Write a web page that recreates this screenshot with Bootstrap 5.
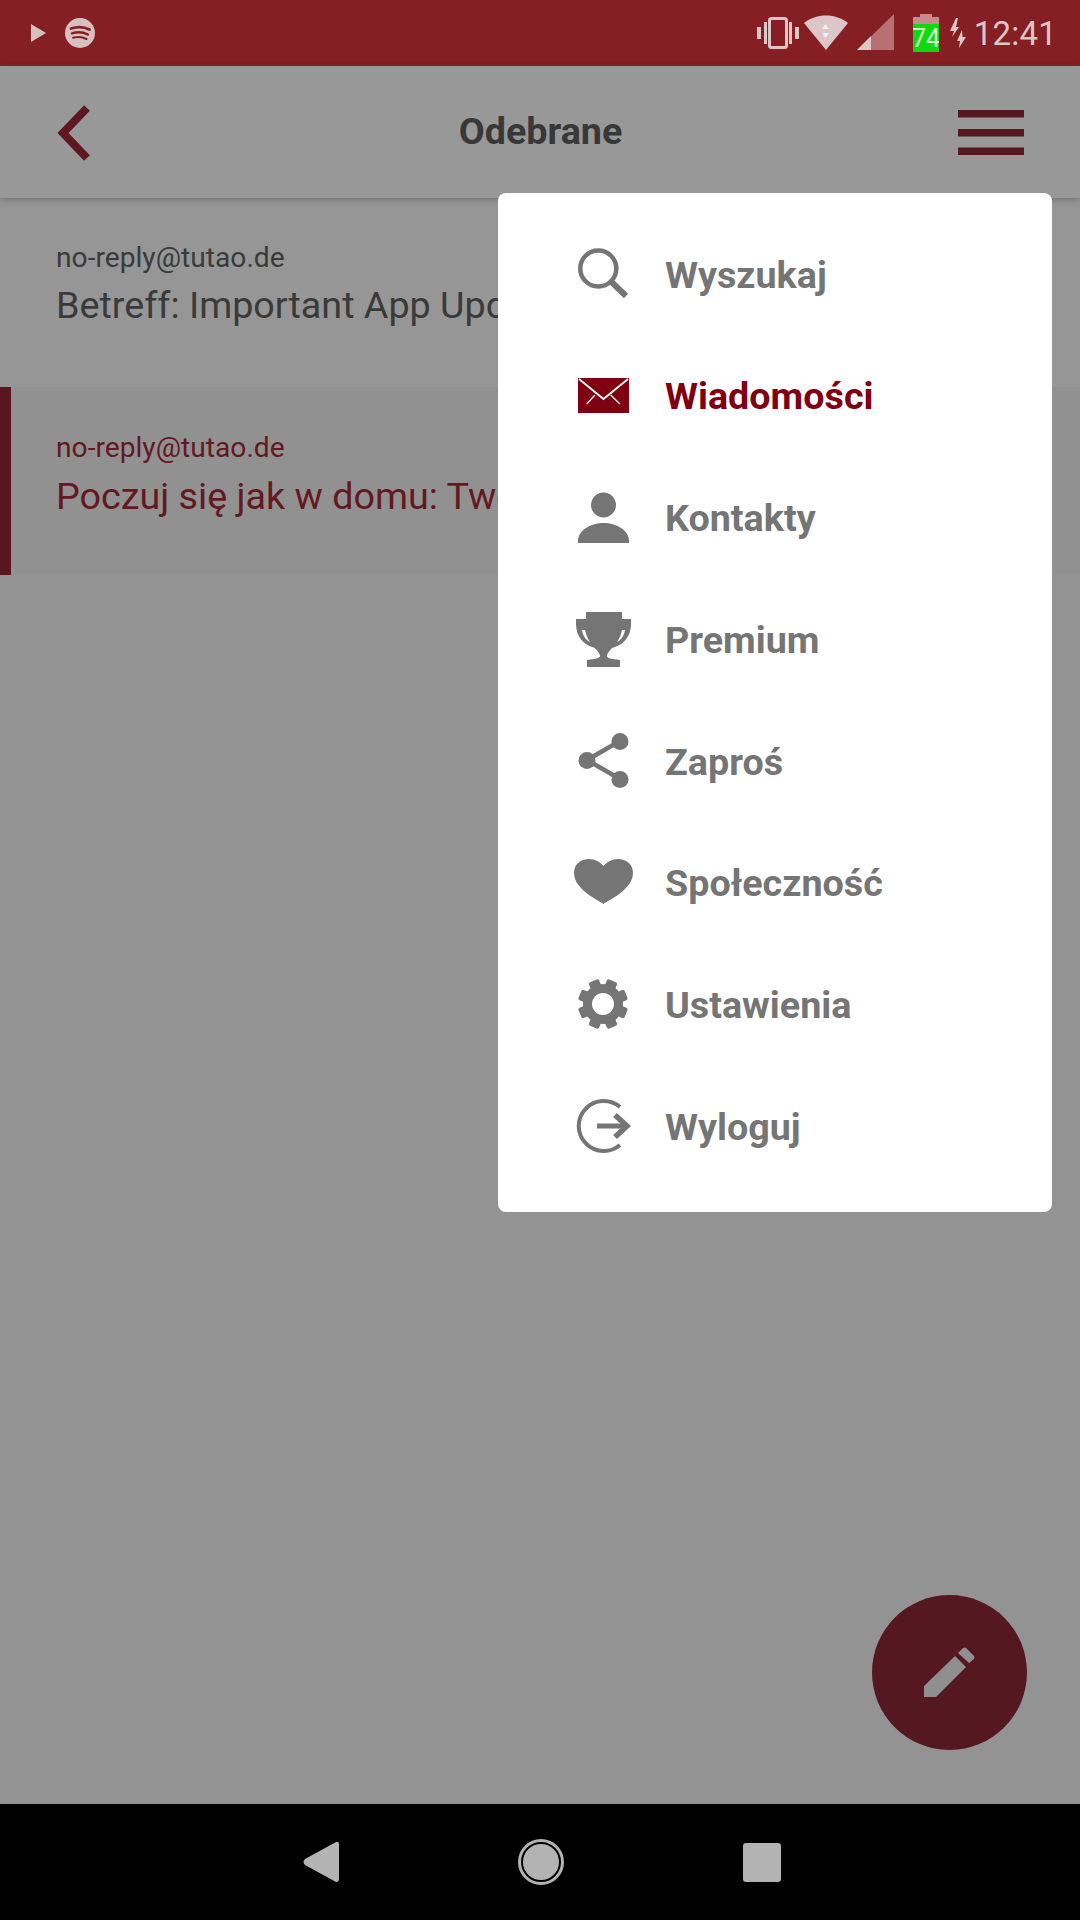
<!DOCTYPE html>
<html lang="pl">
<head>
<meta charset="utf-8">
<title>Odebrane</title>
<link rel="stylesheet" href="https://cdn.jsdelivr.net/npm/bootstrap@5.3.0/dist/css/bootstrap.min.css">
<style>
html,body{height:1920px;width:1080px;overflow:hidden}
body{font-family:Roboto,"Liberation Sans",sans-serif;background:#939393}
.app{position:relative;height:1920px;width:1080px}
.sbar{height:66px;background:#851f23;color:#dcc6c7;padding:0 23px 0 31px}
.clock{font-size:33px;line-height:1;letter-spacing:.2px;margin-left:8px}
.thead{height:132px;background:#989898;padding:0 56px 0 57px;box-shadow:0 2px 6px rgba(0,0,0,.22);position:relative;z-index:1}
.backbox{width:66px;margin-top:2px}
.burger{margin-top:2px}
.ttl{font-size:37.7px;font-weight:700;color:#383838;line-height:1}
.mrow{height:189px;padding:40px 0 0 56px;background:#969696;color:#3a3a3a;white-space:nowrap;overflow:hidden}
.mrow.sel{height:188px;padding-top:41px;background:#919191;color:#641820;box-shadow:inset 11px 0 0 #5a1620}
.mfrom{font-size:28.2px;line-height:40px}
.msubj{font-size:37.7px;line-height:50px;margin-top:2px;width:442px;overflow:hidden}
.sel .msubj{margin-top:3px}
.grow1{flex:1 1 0;background:#939393}
.navb{height:116px;background:#000;gap:179px;padding-left:3px}
.hbtn{width:46px;height:46px;border-radius:50%;background:#b3b3b3;border:2px solid #b3b3b3;position:relative}
.hbtn::after{content:"";position:absolute;inset:1px;border-radius:50%;border:2px solid #000}
.sbtn{width:38px;height:39px;border-radius:3px;background:#b3b3b3}
.drop{position:absolute;top:193px;left:498px;width:554px;height:1019px;background:#fff;border-radius:8px;padding:21.5px 0;z-index:3}
.ditem{height:121.75px;padding-left:75px;gap:32px;color:#757575;font-size:37.7px;font-weight:700;line-height:1}
.ditem.act{color:#7f0010}
.ditem svg{flex:none;display:block}
.fab{position:absolute;left:872px;top:1594.500px;width:155px;height:155px;border-radius:50%;background:#561820;z-index:2}
</style>
</head>
<body>
<div class="app d-flex flex-column">
  <div class="sbar d-flex align-items-center flex-shrink-0">
    <svg width="34" height="30" viewBox="0 0 34 30" fill="#d8bfc0"><path d="M0 6 15 15 0 24Z"/></svg>
    <svg width="30" height="30" viewBox="0 0 30 30"><circle cx="15" cy="15" r="15" fill="#d8bfc0"/><g fill="none" stroke="#851f23" stroke-linecap="round"><path d="M6 10.500C12 8.500 19 8.700 24.500 11.500" stroke-width="2.800"/><path d="M7 15.300C12 13.800 18 14 23 16.500" stroke-width="2.400"/><path d="M8 19.800C12.500 18.700 17.500 19 21.500 21" stroke-width="2"/></g></svg>
    <div class="ms-auto d-flex align-items-center">
      <svg width="42" height="34" viewBox="0 0 42 34" fill="#dcc6c7"><rect x="0" y="11" width="4" height="12"/><rect x="38" y="11" width="4" height="12"/><rect x="7" y="6" width="3" height="22"/><rect x="32" y="6" width="3" height="22"/><rect x="12.500" y="2.500" width="17" height="29" rx="2" fill="none" stroke="#dcc6c7" stroke-width="3"/></svg>
      <svg width="46" height="38" viewBox="0 0 46 38" class="ms-1"><path d="M1 9C13-1 33-1 45 9L23 36Z" fill="#dcc6c7"/><path d="M22.500 10 19 15H26ZM22.500 24 19 19H26Z" fill="#eee"/></svg>
      <svg width="37" height="38" viewBox="0 0 37 38" style="margin-left:8px"><path d="M0 36 37 0V36Z" fill="#b87173"/><path d="M0 36 14 22V36Z" fill="#dcc6c7"/></svg>
      <svg width="26" height="38" viewBox="0 0 26 38" style="margin-left:19px"><path d="M0 3H7V0H19V3H26V10H0Z" fill="#c78a8d"/><rect y="10" width="26" height="28" fill="#11d911"/><text x="13" y="33" text-anchor="middle" font-family="Roboto,sans-serif" font-size="25" fill="#d8f5d0">74</text></svg>
      <svg width="16" height="30" viewBox="0 0 16 30" fill="#dcc6c7" style="margin-left:11px"><path d="M6 0 0 13H4L2 19 9 9H6L8 0ZM12 12 7 23H10L9 30 16 19H12.500Z"/></svg>
      <span class="clock">12:41</span>
    </div>
  </div>
  <div class="thead d-flex align-items-center justify-content-between flex-shrink-0">
    <div class="backbox"><svg class="d-block" width="33" height="56" viewBox="0 0 33 56"><path d="M30 3 6 28 30 53" fill="none" stroke="#601820" stroke-width="8"/></svg></div>
    <div class="ttl">Odebrane</div>
    <svg class="burger" width="66" height="46" viewBox="0 0 66 46" fill="#561820"><rect width="66" height="7.500" y="0"/><rect width="66" height="7.500" y="19"/><rect width="66" height="7.500" y="37.500"/></svg>
  </div>
  <div class="flex-shrink-0">
    <div class="mrow">
      <div class="mfrom">no-reply@tutao.de</div>
      <div class="msubj">Betreff: Important App Upd</div>
    </div>
    <div class="mrow sel">
      <div class="mfrom">no-reply@tutao.de</div>
      <div class="msubj">Poczuj się jak w domu: Two</div>
    </div>
  </div>
  <div class="grow1"></div>
  <div class="navb d-flex align-items-center justify-content-center flex-shrink-0">
    <svg width="36" height="42" viewBox="0 0 36 42" fill="#b3b3b3"><path d="M33 1 2 18Q-1 21 2 24L33 41Q36 41 36 38V3Q36 0 33 1Z"/></svg>
    <div class="hbtn"></div>
    <div class="sbtn"></div>
  </div>

  <div class="drop">
    <div class="ditem d-flex align-items-center"><svg width="60" height="60" viewBox="0 0 60 60" fill="none" stroke="#757575"><circle cx="25.300" cy="23.500" r="18" stroke-width="4.500"/><path d="M38.500 37 53 51" stroke-width="6"/></svg><span>Wyszukaj</span></div>
    <div class="ditem act d-flex align-items-center"><svg width="60" height="60" viewBox="0 0 60 60"><rect x="5" y="11" width="51" height="35" fill="#7f0010"/><g fill="none" stroke="#fff" stroke-width="1.800"><path d="M6 12 30.500 32 55 12"/><path d="M13.700 37 22 28M47 37 37.700 28" stroke-width="1.200"/></g></svg><span>Wiadomości</span></div>
    <div class="ditem d-flex align-items-center"><svg width="60" height="60" viewBox="0 0 60 60" fill="#757575"><circle cx="30.500" cy="16" r="12.500"/><path d="M5 54V52C5 41 18 34 30.500 34S56 41 56 52V54Z"/></svg><span>Kontakty</span></div>
    <div class="ditem d-flex align-items-center"><svg width="60" height="60" viewBox="0 0 60 60" fill="#757575"><path d="M13 1H49V8H58V13C58 25 51 34 39 37 37 40 34 42 34 45 34 47 38 48 47 49V56H14V49C23 48 27 47 27 45 27 42 24 40 22 37 10 34 3 25 3 13V8H13Z"/><path d="M12 19H9C10 25 13 29 17 31 14 27 13 23 12 19ZM49 19H52C51 25 48 29 44 31 47 27 48 23 49 19Z" fill="#fff"/></svg><span>Premium</span></div>
    <div class="ditem d-flex align-items-center"><svg width="60" height="60" viewBox="0 0 60 60" fill="#757575"><path d="M47 9 14 28 47 47" fill="none" stroke="#757575" stroke-width="4.500"/><circle cx="47" cy="9.500" r="8.500"/><circle cx="47" cy="47.500" r="8.500"/><circle cx="14" cy="28.500" r="8.500"/></svg><span>Zaproś</span></div>
    <div class="ditem d-flex align-items-center"><svg width="60" height="60" viewBox="0 0 60 60" fill="#757575"><path d="M30.500 50C27 47 1 36 1 19 1 10 8 5 16 5 22 5 27 8 30.500 12 34 8 39 5 45 5 53 5 60 10 60 19 60 36 34 47 30.500 50Z"/></svg><span>Społeczność</span></div>
    <div class="ditem d-flex align-items-center"><svg width="60" height="60" viewBox="0 0 60 60" fill="#757575"><circle cx="30" cy="28" r="20"/><g><rect x="24.500" y="3" width="11" height="9" rx="2" transform="rotate(22.500 30 28)"/><rect x="24.500" y="3" width="11" height="9" rx="2" transform="rotate(67.500 30 28)"/><rect x="24.500" y="3" width="11" height="9" rx="2" transform="rotate(112.500 30 28)"/><rect x="24.500" y="3" width="11" height="9" rx="2" transform="rotate(157.500 30 28)"/><rect x="24.500" y="3" width="11" height="9" rx="2" transform="rotate(202.500 30 28)"/><rect x="24.500" y="3" width="11" height="9" rx="2" transform="rotate(247.500 30 28)"/><rect x="24.500" y="3" width="11" height="9" rx="2" transform="rotate(292.500 30 28)"/><rect x="24.500" y="3" width="11" height="9" rx="2" transform="rotate(337.500 30 28)"/></g><circle cx="30" cy="28" r="11" fill="#fff"/></svg><span>Ustawienia</span></div>
    <div class="ditem d-flex align-items-center"><svg width="60" height="60" viewBox="0 0 60 60" fill="none" stroke="#757575" stroke-width="4"><path d="M47 9A25 25 0 1 0 47 47"/><path d="M24 28H52" stroke-width="5"/><path d="M42 17 54 28 42 39" stroke-width="5.500"/></svg><span>Wyloguj</span></div>
  </div>

  <div class="fab d-flex align-items-center justify-content-center">
    <svg width="51" height="50" viewBox="0 0 51 50" fill="#8f8f8f"><path d="M0 39 31 9 42 20 12 50H0Z"/><path d="M34 6 39 1Q40.500 0 42 1L50 9Q51 10.500 50 12L45 16Z"/></svg>
  </div>
</div>
<script src="https://cdn.jsdelivr.net/npm/bootstrap@5.3.0/dist/js/bootstrap.bundle.min.js"></script>
</body>
</html>
